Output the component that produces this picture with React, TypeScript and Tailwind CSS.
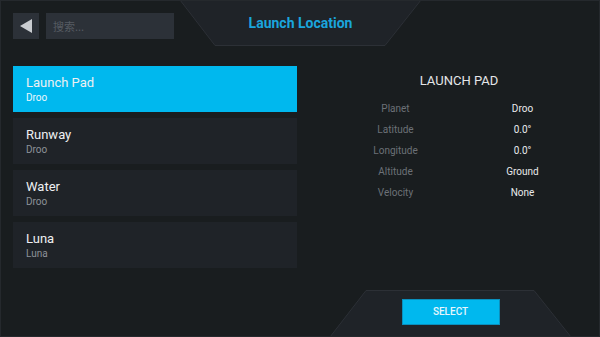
import React from 'react';

interface LaunchSite {
    name: string;
    planet: string;
}

const sites: LaunchSite[] = [
    { name: 'Launch Pad', planet: 'Droo' },
    { name: 'Runway', planet: 'Droo' },
    { name: 'Water', planet: 'Droo' },
    { name: 'Luna', planet: 'Luna' },
];

const details: [string, string][] = [
    ['Planet', 'Droo'],
    ['Latitude', '0.0°'],
    ['Longitude', '0.0°'],
    ['Altitude', 'Ground'],
    ['Velocity', 'None'],
];

const App: React.FC = () => {
    const selected = 0;

    return (
        <div className="w-[600px] h-[337px] border border-[#25292d] bg-[#191d1f] font-['Roboto',sans-serif] relative overflow-hidden">
            {/* header */}
            <div className="relative h-[45px]">
                <div className="flex items-center gap-[7px] pl-[12px] pt-[12px]">
                    <button className="w-[26px] h-[26px] bg-[#2c3138] flex items-center justify-center">
                        <svg width="14" height="16" viewBox="0 0 14 16">
                            <polygon points="1,8 13,1 13,15" fill="#c9ccd0" />
                        </svg>
                    </button>
                    <div className="w-[128px] h-[26px] bg-[#2c3138] flex items-center px-[7px]">
                        <span className="text-[11px] text-[#565b62] font-['Noto_Sans_CJK_SC',sans-serif]">搜索...</span>
                    </div>
                </div>
                <div className="absolute left-[179px] top-0 w-[241px] h-[45px] flex items-center justify-center">
                    <svg className="absolute inset-0" width="241" height="45" viewBox="0 0 241 45">
                        <polygon points="0,-1 241,-1 205,44.5 35,44.5" fill="#1f2328" stroke="#2c3036" strokeWidth="1" />
                    </svg>
                    <span className="relative text-[14px] font-bold text-[#1aa5dd]">Launch Location</span>
                </div>
            </div>

            {/* body */}
            <div className="flex pl-[12px] pt-[20px]">
                <ul className="w-[284px] flex flex-col gap-[6px]">
                    {sites.map((site, i) => (
                        <li
                            key={site.name}
                            className={`h-[46px] px-[13px] pt-[8px] ${i === selected ? 'bg-[#00b8ee]' : 'bg-[#1f2328]'}`}
                        >
                            <p className="text-[13px] leading-[17px] text-[#eef0f2]">{site.name}</p>
                            <p className={`text-[10px] leading-[13px] ${i === selected ? 'text-[#eaf7fd]' : 'text-[#8d9298]'}`}>{site.planet}</p>
                        </li>
                    ))}
                </ul>

                <div className="ml-[35px] w-[254px] pt-[7px]">
                    <h2 className="text-center text-[13px] leading-[15px] text-[#e4e6e8]">LAUNCH PAD</h2>
                    <div className="mt-[14px] flex flex-col gap-[7px]">
                        {details.map(([label, value]) => (
                            <div key={label} className="flex text-[10px] leading-[14px]">
                                <span className="w-1/2 text-center text-[#6c7177]">{label}</span>
                                <span className="w-1/2 text-center text-[#e8eaec]">{value}</span>
                            </div>
                        ))}
                    </div>
                </div>
            </div>

            {/* footer */}
            <div className="absolute left-[329px] bottom-0 w-[241px] h-[46px] flex items-center justify-center">
                <svg className="absolute inset-0" width="241" height="46" viewBox="0 0 241 46">
                    <polygon points="36,0.5 204,0.5 241,47 0,47" fill="#1f2328" stroke="#2c3036" strokeWidth="1" />
                </svg>
                <button className="relative w-[98px] h-[26px] bg-[#00b8ee] border border-[#0a8fbd] text-[10px] font-medium text-[#e6f6fd] -mt-[3px]">
                    SELECT
                </button>
            </div>
        </div>
    );
};

export default App;
